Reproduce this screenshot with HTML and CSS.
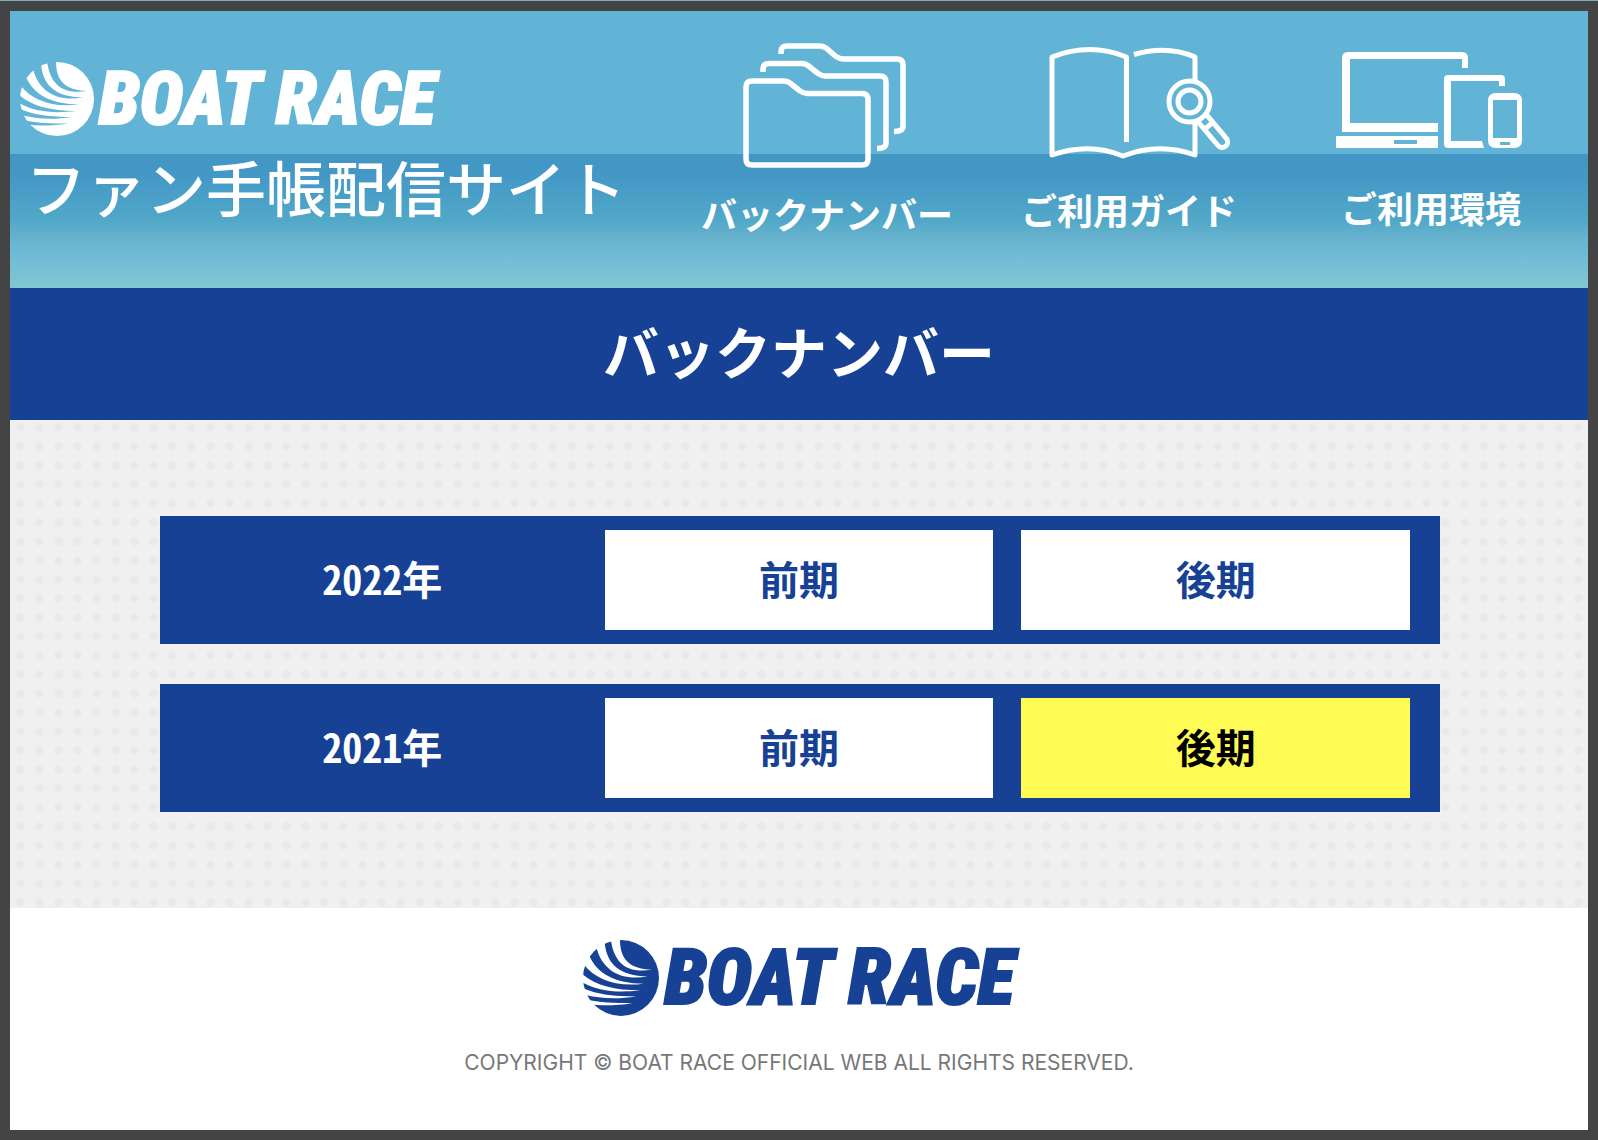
FILE: index.html
```html
<!DOCTYPE html>
<html lang="ja">
<head>
    <meta charset="UTF-8">
    <meta name="viewport" content="width=device-width, initial-scale=1.0">
    <title>バックナンバー | BOAT RACE ファン手帳配信サイト</title>
    <link rel="stylesheet" href="styles.css">
</head>
<body>

    <header class="header">
        <div class="brand">
            <a class="logo" href="#">
                <svg class="logo-mark" viewBox="0 0 74 74" aria-hidden="true">
                    <mask id="stripes">
                        <rect width="74" height="74" fill="#fff"/>
                        <path d="M36 -1C36 18 44 28 67 29C42 33 30 22 27 -1z"/>
                        <path d="M21 2C23 24 36 35 63 35.500C37 40 19 30 13 7z"/>
                        <path d="M6 15C14 33 31 42 59 42.500C32 46 12 38 1 24z"/>
                        <path d="M-1 33C12 44 30 49 56 49C31 52 13 49 -1 41z"/>
                        <path d="M0 47C14 53 30 55 52 55C32 58 16 57 1 53z"/>
                        <path d="M3 58C16 61 30 61.500 48 61.500C32 64 18 64 6 62.500z"/>
                    </mask>
                    <circle cx="37" cy="37" r="37" fill="currentColor" mask="url(#stripes)"/>
                </svg>
                <span>BOAT RACE</span>
            </a>
            <p class="site-name">ファン手帳配信サイト</p>
        </div>

        <nav class="nav">
            <a href="#">
                <svg width="190" height="150" viewBox="0 0 190 150" aria-hidden="true">
                    <g fill="none" stroke="#fff" stroke-width="5.500">
                        <path d="M20 45H52q3 0 6 2L68 55q4 2.500 7 2.500H130q6 0 6 6V123q0 6-6 6H20q-6 0-6-6V51q0-6 6-6z"/>
                        <path d="M31 36V33.500q0-6 6-6H70q3 0 6 2L86 37.500q4 2.500 7 2.500H148q6 0 6 6V107q0 5.500-9 5.500"/>
                        <path d="M49 18V16q0-6 6-6H88q3 0 6 2L104 20.500q4 2.500 7 2.500H165q6 0 6 6V90q0 5.500-9 5.500"/>
                    </g>
                </svg>
                <span>バックナンバー</span>
            </a>
            <a href="#">
                <svg width="190" height="146" viewBox="0 0 190 146" overflow="visible" aria-hidden="true">
                    <g fill="none" stroke="#fff" stroke-width="5" stroke-linejoin="round">
                        <path d="M92.500 106V21Q56 6 18 21V119Q55 106 89 120Q125 106 161 119V85"/>
                        <path d="M100 18.500Q133 9 161 21V44"/>
                        <circle cx="155.500" cy="65.500" r="20.500"/>
                        <circle cx="155.500" cy="65.500" r="11.500"/>
                        <g transform="translate(155.500 65.500) rotate(50)">
                            <path d="M21 -4.500H52a5.500 5.500 0 0 1 0 11H21M31 -5V6"/>
                        </g>
                    </g>
                </svg>
                <span>ご利用ガイド</span>
            </a>
            <a href="#">
                <svg width="190" height="144" viewBox="0 0 190 144" aria-hidden="true">
                    <path fill="#fff" d="M6 96V22q0-6 6-6H126q6 0 6 6V32H126V23H14V87H102V96zM0 100H102V112H0zM58 104V108H81V104z" fill-rule="evenodd"/>
                    <path fill="#fff" d="M108 108V43q0-4 4-4H165q4 0 4 4V50H163V45H115V105H146L148 112H112q-4 0-4-4z"/>
                    <path fill="#fff" fill-rule="evenodd" d="M160 57H178q8 0 8 8V104q0 8-8 8H160q-8 0-8-8V65q0-8 8-8zM157 64V102H181V64zM164 106V109H174V106z"/>
                </svg>
                <span>ご利用環境</span>
            </a>
        </nav>
    </header>

    <h1 class="page-title">バックナンバー</h1>

    <main class="main">
        <section class="year">
            <h2>2022年</h2>
            <a href="#">前期</a>
            <a href="#">後期</a>
        </section>
        <section class="year">
            <h2>2021年</h2>
            <a href="#">前期</a>
            <a class="current" href="#">後期</a>
        </section>
    </main>

    <footer class="footer">
        <a class="logo" href="#">
            <svg class="logo-mark" viewBox="0 0 74 74" aria-hidden="true">
                <circle cx="37" cy="37" r="37" fill="currentColor" mask="url(#stripes)"/>
            </svg>
            <span>BOAT RACE</span>
        </a>
        <small>COPYRIGHT © BOAT RACE OFFICIAL WEB ALL RIGHTS RESERVED.</small>
    </footer>

</body>
</html>
```
FILE: styles.css
```css
* {
    margin: 0;
    padding: 0;
    box-sizing: border-box;
}

body {
    display: flex;
    flex-direction: column;
    min-height: 100vh;
    padding: 10px;
    border-top: 1px solid #86aebf;
    background: #444;
    font-family: "Noto Sans CJK JP", sans-serif;
}

a {
    color: inherit;
    text-decoration: none;
}

/* Header */
.header {
    display: flex;
    justify-content: space-between;
    padding: 25px 6px 48px 10px;
    color: #fff;
    background: linear-gradient(#61b4d5 0, #61b4d5 143px, #4296c4 143px, #4498c6 165px, #52a8c8 210px, #66b2ce 226px, #74bdd6 250px, #82c6d1 100%);
}

.brand {
    padding-top: 26px;
}

.logo {
    display: flex;
    align-items: center;
    gap: 5px;
    font-family: "Roboto Condensed", Roboto, sans-serif;
    font-size: 74px;
    font-weight: 900;
    font-style: italic;
    line-height: 74px;
    white-space: nowrap;
    -webkit-text-stroke: 2px currentColor;
}

.logo-mark {
    flex: none;
    width: 74px;
    height: 74px;
}

.site-name {
    padding: 13px 0 0 6px;
    font-size: 60px;
    font-weight: 500;
    line-height: 74px;
    white-space: nowrap;
}

.nav {
    display: flex;
}

.nav a {
    display: flex;
    flex-direction: column;
    align-items: center;
    width: 302px;
    font-size: 36px;
    font-weight: bold;
    line-height: 54px;
    white-space: nowrap;
}

/* Page title */
.page-title {
    padding-bottom: 8px;
    color: #fff;
    background: #164194;
    font-size: 56px;
    font-weight: bold;
    line-height: 124px;
    text-align: center;
}

/* Back numbers */
.main {
    display: grid;
    gap: 40px;
    padding: 96px 148px 96px 150px;
    background: radial-gradient(circle, #e9e9e9 3px, #f0f0f0 5px) 1px -2px / 19px 19px;
}

.year {
    display: grid;
    grid-template-columns: repeat(3, 1fr);
    gap: 28px;
    padding: 14px 30px 14px 28px;
    background: #164194;
    font-size: 40px;
    font-weight: bold;
    line-height: 96px;
    text-align: center;
}

.year h2 {
    padding-bottom: 4px;
    color: #fff;
    font-size: 40px;
    font-feature-settings: "hwid";
}

.year a {
    padding-bottom: 4px;
    color: #164194;
    background: #fff;
}

.year .current {
    color: #000;
    background: #fffb55;
}

/* Footer */
.footer {
    display: flex;
    flex: 1;
    flex-direction: column;
    align-items: center;
    gap: 32px;
    padding: 32px 0;
    background: #fff;
    color: #164194;
}

.footer .logo {
    font-size: 77px;
    line-height: 76px;
}

.footer .logo-mark {
    width: 76px;
    height: 76px;
}

.footer small {
    color: #777;
    font-family: Inter, sans-serif;
    font-size: 21px;
    line-height: 30px;
}
```
